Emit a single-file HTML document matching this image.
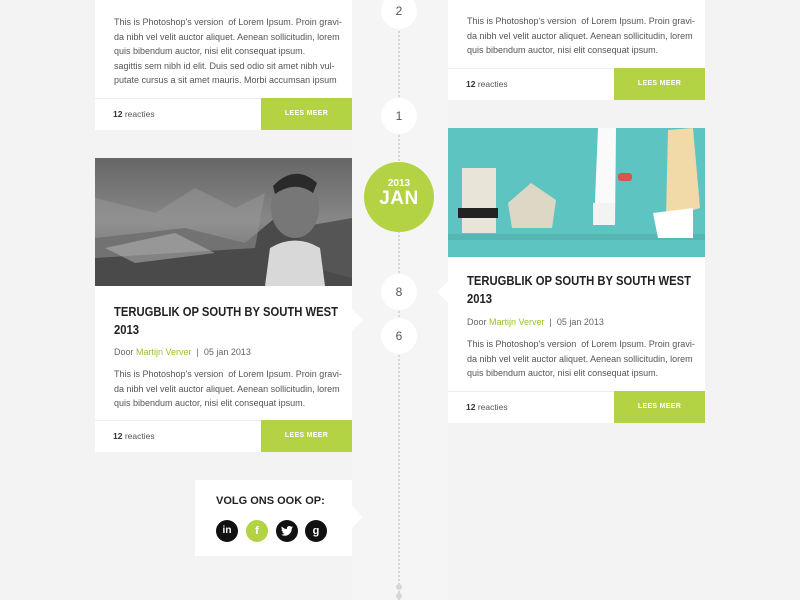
<!DOCTYPE html>
<html><head><meta charset="utf-8"><style>
*{margin:0;padding:0;box-sizing:border-box}
body{width:800px;height:600px;overflow:hidden;background:#f3f3f3;font-family:"Liberation Sans",sans-serif;position:relative}
.col{position:absolute;left:352px;top:0;width:96px;height:600px;background:#f5f5f5}
.line{position:absolute;left:398px;top:0;height:600px;border-left:2px dotted #d6d6d6}
.card{position:absolute;background:#fff;width:257px}
.p{position:absolute;left:19px;font-size:9px;line-height:14.5px;color:#555;white-space:nowrap}
.meta{position:absolute;left:19px;font-size:9px;color:#666}
.meta b{color:#9bc22a;font-weight:normal}
.title{position:absolute;left:19px;font-size:12.5px;line-height:18px;font-weight:bold;color:#222;white-space:nowrap;transform:scaleX(.9);transform-origin:left top}
.foot{position:absolute;left:0;width:257px;height:32px;border-top:1px solid #ececec;background:#fff}
.foot span{position:absolute;left:18px;top:10px;font-size:8.5px;color:#555}
.foot span b{color:#333}
.btn{position:absolute;right:0;top:-1px;width:91px;height:32px;background:#b4d344;color:#fff;font-size:7px;font-weight:bold;text-align:center;line-height:32px;letter-spacing:.3px}
.dot{position:absolute;width:36px;height:36px;border-radius:50%;background:#fff;left:381px;text-align:center;line-height:36px;font-size:12px;color:#555}
.arr{position:absolute;width:0;height:0;border-top:11px solid transparent;border-bottom:11px solid transparent}
.soc{position:absolute;width:22px;height:22px;border-radius:50%;background:#111;color:#fff;font-size:11px;font-weight:bold;text-align:center;line-height:22px;top:520px}
</style></head><body>
<div class="col"></div>
<div class="line"></div>

<div class="card" style="left:95px;top:-10px;height:140px">
  <div class="meta" style="top:0">Door <b>Martijn Verver</b> | 05 jan 2013</div>
  <div class="p" style="top:25px">This is Photoshop's version &nbsp;of Lorem Ipsum. Proin gravi-<br>da nibh vel velit auctor aliquet. Aenean sollicitudin, lorem<br>quis bibendum auctor, nisi elit consequat ipsum.<br>sagittis sem nibh id elit. Duis sed odio sit amet nibh vul-<br>putate cursus a sit amet mauris. Morbi accumsan ipsum</div>
  <div class="foot" style="top:108px"><span><b>12</b> reacties</span><div class="btn">LEES MEER</div></div>
</div>

<div class="card" style="left:448px;top:-10px;height:110px">
  <div class="meta" style="top:0">Door <b>Martijn Verver</b> | 05 jan 2013</div>
  <div class="p" style="top:24px">This is Photoshop's version &nbsp;of Lorem Ipsum. Proin gravi-<br>da nibh vel velit auctor aliquet. Aenean sollicitudin, lorem<br>quis bibendum auctor, nisi elit consequat ipsum.</div>
  <div class="foot" style="top:78px"><span><b>12</b> reacties</span><div class="btn">LEES MEER</div></div>
</div>

<div class="card" style="left:95px;top:158px;height:294px">
  <svg width="257" height="128" style="position:absolute;left:0;top:0;display:block">
    <defs><linearGradient id="g1" x1="0" y1="0" x2="0" y2="1"><stop offset="0" stop-color="#666"/><stop offset=".5" stop-color="#888"/><stop offset="1" stop-color="#333"/></linearGradient></defs>
    <rect width="257" height="128" fill="url(#g1)"/>
    <path d="M0 80 L90 70 L150 85 L180 60 L257 75 L257 128 L0 128Z" fill="#4a4a4a"/>
    <path d="M0 40 L60 55 L100 30 L140 50 L170 35 L160 90 L0 100Z" fill="#999" opacity=".5"/>
    <path d="M10 90 L80 75 L120 95 L40 105Z" fill="#bbb" opacity=".5"/>
    <path d="M200 70 L257 60 L257 120 L220 110Z" fill="#555"/>
    <ellipse cx="200" cy="50" rx="24" ry="30" fill="#777"/>
    <path d="M178 28 Q200 5 222 25 L218 35 Q200 22 180 36Z" fill="#2a2a2a"/>
    <path d="M170 128 L175 90 Q200 75 225 90 L230 128Z" fill="#d8d8d8"/>
  </svg>
  <div class="title" style="top:145px">TERUGBLIK OP SOUTH BY SOUTH WEST<br>2013</div>
  <div class="meta" style="top:189px">Door <b>Martijn Verver</b> &nbsp;| &nbsp;05 jan 2013</div>
  <div class="p" style="top:209px">This is Photoshop's version &nbsp;of Lorem Ipsum. Proin gravi-<br>da nibh vel velit auctor aliquet. Aenean sollicitudin, lorem<br>quis bibendum auctor, nisi elit consequat ipsum.</div>
  <div class="foot" style="top:262px"><span><b>12</b> reacties</span><div class="btn">LEES MEER</div></div>
</div>
<div class="arr" style="left:352px;top:309px;border-left:11px solid #fff"></div>

<div class="card" style="left:448px;top:128px;height:295px">
  <svg width="257" height="129" style="position:absolute;left:0;top:0;display:block">
    <rect width="257" height="129" fill="#5ec4c1"/>
    <rect x="0" y="106" width="257" height="6" fill="#55b6b3"/>
    <rect x="14" y="40" width="34" height="65" fill="#e8e4d8"/>
    <rect x="10" y="80" width="40" height="10" fill="#222"/>
    <path d="M60 75 L83 55 L108 72 L104 100 L64 100Z" fill="#ddd7c6"/>
    <path d="M150 0 L168 0 L167 96 L146 96Z" fill="#fafafa"/>
    <rect x="145" y="75" width="22" height="22" fill="#f3f3f3"/>
    <rect x="170" y="45" width="14" height="8" rx="3" fill="#d9534f"/>
    <path d="M220 2 L245 0 L252 80 L218 90Z" fill="#f1d9a8"/>
    <path d="M205 85 L245 80 L245 110 L210 110Z" fill="#fff"/>
  </svg>
  <div class="title" style="top:144px">TERUGBLIK OP SOUTH BY SOUTH WEST<br>2013</div>
  <div class="meta" style="top:189px">Door <b>Martijn Verver</b> &nbsp;| &nbsp;05 jan 2013</div>
  <div class="p" style="top:209px">This is Photoshop's version &nbsp;of Lorem Ipsum. Proin gravi-<br>da nibh vel velit auctor aliquet. Aenean sollicitudin, lorem<br>quis bibendum auctor, nisi elit consequat ipsum.</div>
  <div class="foot" style="top:263px"><span><b>12</b> reacties</span><div class="btn">LEES MEER</div></div>
</div>
<div class="arr" style="left:437px;top:281px;border-right:11px solid #fff"></div>

<div class="dot" style="top:-7px">2</div>
<div class="dot" style="top:98px">1</div>
<div class="dot" style="top:274px">8</div>
<div class="dot" style="top:318px">6</div>
<div style="position:absolute;left:364px;top:162px;width:70px;height:70px;border-radius:50%;background:#b4d344;color:#fff;text-align:center;font-weight:bold">
  <div style="font-size:10px;margin-top:16px">2013</div>
  <div style="font-size:19px;line-height:20px;letter-spacing:.5px">JAN</div>
</div>

<div class="card" style="left:195px;top:480px;width:157px;height:76px">
  <div style="position:absolute;left:21px;top:15px;font-size:11px;font-weight:bold;color:#222;white-space:nowrap">VOLG ONS OOK OP:</div>
</div>
<div class="arr" style="left:352px;top:506px;border-left:11px solid #fff"></div>
<div class="soc" style="left:216px;font-size:10px">in</div>
<div class="soc" style="left:246px;background:#b4d344">f</div>
<div class="soc" style="left:276px"><svg width="12" height="10" viewBox="0 0 24 20" style="margin-top:6px"><path d="M24 2.4a10 10 0 0 1-2.8.8A5 5 0 0 0 23.3.4a10 10 0 0 1-3.1 1.2A4.9 4.9 0 0 0 11.8 6 14 14 0 0 1 1.7.9a4.9 4.9 0 0 0 1.5 6.6A4.9 4.9 0 0 1 1 6.9a4.9 4.9 0 0 0 3.9 4.9 5 5 0 0 1-2.2.1 4.9 4.9 0 0 0 4.6 3.4A9.9 9.9 0 0 1 0 17.3 14 14 0 0 0 7.5 19.5c9 0 14-7.5 14-14v-.6A10 10 0 0 0 24 2.4z" fill="#fff"/></svg></div>
<div class="soc" style="left:305px">g</div>
<div style="position:absolute;left:396px;top:584px;width:6px;height:6px;border-radius:50%;background:#d6d6d6"></div>
<div style="position:absolute;left:396px;top:593px;width:6px;height:6px;border-radius:50%;background:#d6d6d6"></div>
</body></html>
